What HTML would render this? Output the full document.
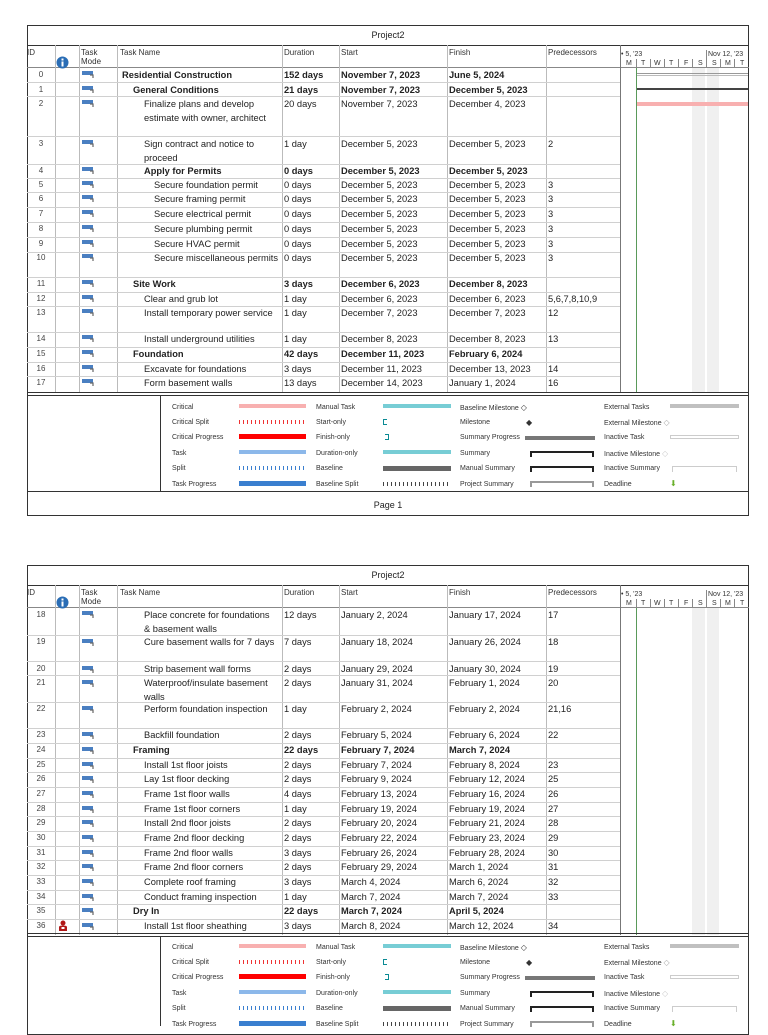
<!DOCTYPE html>
<html><head><meta charset="utf-8"><style>
*{margin:0;padding:0;box-sizing:border-box}
body{width:768px;height:1024px;background:#fff;position:relative;overflow:hidden;font-family:"Liberation Sans",sans-serif;color:#222}
.a{position:absolute}
.frame{position:absolute;left:27px;width:722px;border:1px solid #333}
.hl{position:absolute;height:1px;background:#d0d0d0}
.vl{position:absolute;width:1px;background:#bbb}
.t{position:absolute;font-size:9.3px;line-height:14px;white-space:nowrap}
.b{font-weight:bold}
.id{width:28px;text-align:center;font-size:8px;color:#444}
.hd{font-size:8px;color:#333;line-height:9px}
.lg{position:absolute;font-size:7px;color:#333;line-height:9px;white-space:nowrap}
.icon{position:absolute;width:14px;height:8px}
</style></head><body>

<!-- ================= PAGE 1 ================= -->
<div class="frame" style="top:25px;height:491px"></div>
<div class="t" style="left:27px;width:722px;top:28px;text-align:center;font-size:9px">Project2</div>
<div class="a" style="left:27px;top:45px;width:722px;height:1px;background:#333"></div>
<div class="a" style="left:27px;top:67px;width:722px;height:1px;background:#888"></div>
<!-- gantt shading -->
<div class="a" style="left:692px;top:68px;width:13px;height:324px;background:#f0f0f0"></div>
<div class="a" style="left:707px;top:68px;width:12px;height:324px;background:#f0f0f0"></div>
<div class="a" style="left:636px;top:68px;width:1px;height:324px;background:#5a9a5a"></div>
<div class="a" style="left:637px;top:73px;width:111px;height:1px;background:#999"></div>
<div class="a" style="left:637px;top:75px;width:111px;height:1px;background:#bbb"></div>
<div class="a" style="left:637px;top:88px;width:111px;height:2px;background:#444"></div>
<div class="a" style="left:637px;top:102px;width:111px;height:4px;background:#f8b0b0"></div>
<!-- vertical lines -->
<div class="vl" style="left:55px;top:45px;height:347px"></div>
<div class="vl" style="left:79px;top:45px;height:347px"></div>
<div class="vl" style="left:117px;top:45px;height:347px"></div>
<div class="vl" style="left:282px;top:45px;height:347px"></div>
<div class="vl" style="left:339px;top:45px;height:347px"></div>
<div class="vl" style="left:447px;top:45px;height:347px"></div>
<div class="vl" style="left:546px;top:45px;height:347px"></div>
<div class="vl" style="left:620px;top:45px;height:347px;background:#777"></div>
<!-- header -->
<div class="t hd" style="left:27px;top:48px">ID</div>
<svg class="a" style="left:56px;top:56px" width="13" height="13"><circle cx="6.5" cy="6.5" r="6" fill="#2a6db5"/><rect x="5.5" y="5.5" width="2" height="5" fill="#fff"/><rect x="5.5" y="2.5" width="2" height="2" fill="#fff"/></svg>
<div class="t hd" style="left:81px;top:48px">Task<br>Mode</div>
<div class="t hd" style="left:120px;top:48px">Task Name</div>
<div class="t hd" style="left:284px;top:48px">Duration</div>
<div class="t hd" style="left:341px;top:48px">Start</div>
<div class="t hd" style="left:449px;top:48px">Finish</div>
<div class="t hd" style="left:548px;top:48px">Predecessors</div>
<div class="t hd" style="left:621px;top:50px;font-size:7px">• 5, '23</div>
<div class="t hd" style="left:708px;top:50px;font-size:7px">Nov 12, '23</div>
<div class="a" style="left:706px;top:50px;width:1px;height:17px;background:#888"></div>
<div class="t hd" style="left:622px;top:59px;font-size:7px;letter-spacing:0">
<span style="position:absolute;left:4px">M</span><span style="position:absolute;left:19px">T</span><span style="position:absolute;left:32px">W</span><span style="position:absolute;left:47px">T</span><span style="position:absolute;left:62px">F</span><span style="position:absolute;left:76px">S</span><span style="position:absolute;left:90px">S</span><span style="position:absolute;left:103px">M</span><span style="position:absolute;left:118px">T</span></div>
<div class="a" style="left:636px;top:59px;width:1px;height:8px;background:#888"></div>
<div class="a" style="left:650px;top:59px;width:1px;height:8px;background:#888"></div>
<div class="a" style="left:664px;top:59px;width:1px;height:8px;background:#888"></div>
<div class="a" style="left:678px;top:59px;width:1px;height:8px;background:#888"></div>
<div class="a" style="left:692px;top:59px;width:1px;height:8px;background:#888"></div>
<div class="a" style="left:720px;top:59px;width:1px;height:8px;background:#888"></div>
<div class="a" style="left:734px;top:59px;width:1px;height:8px;background:#888"></div>

<!-- row lines page1 -->
<div class="hl" style="left:27px;width:593px;top:82px"></div>
<div class="hl" style="left:27px;width:593px;top:96px"></div>
<div class="hl" style="left:27px;width:593px;top:136px"></div>
<div class="hl" style="left:27px;width:593px;top:164px"></div>
<div class="hl" style="left:27px;width:593px;top:178px"></div>
<div class="hl" style="left:27px;width:593px;top:192px"></div>
<div class="hl" style="left:27px;width:593px;top:207px"></div>
<div class="hl" style="left:27px;width:593px;top:222px"></div>
<div class="hl" style="left:27px;width:593px;top:237px"></div>
<div class="hl" style="left:27px;width:593px;top:252px"></div>
<div class="hl" style="left:27px;width:593px;top:277px"></div>
<div class="hl" style="left:27px;width:593px;top:292px"></div>
<div class="hl" style="left:27px;width:593px;top:306px"></div>
<div class="hl" style="left:27px;width:593px;top:332px"></div>
<div class="hl" style="left:27px;width:593px;top:347px"></div>
<div class="hl" style="left:27px;width:593px;top:362px"></div>
<div class="hl" style="left:27px;width:593px;top:376px"></div>

<!-- rows page 1 -->
<div class="t id" style="left:27px;top:68px">0</div><div class="t b" style="left:122px;top:68px">Residential Construction</div><div class="t b" style="left:284px;top:68px">152 days</div><div class="t b" style="left:341px;top:68px">November 7, 2023</div><div class="t b" style="left:449px;top:68px">June 5, 2024</div>
<div class="t id" style="left:27px;top:83px">1</div><div class="t b" style="left:133px;top:83px">General Conditions</div><div class="t b" style="left:284px;top:83px">21 days</div><div class="t b" style="left:341px;top:83px">November 7, 2023</div><div class="t b" style="left:449px;top:83px">December 5, 2023</div>
<div class="t id" style="left:27px;top:97px">2</div><div class="t" style="left:144px;top:97px">Finalize plans and develop<br>estimate with owner, architect</div><div class="t" style="left:284px;top:97px">20 days</div><div class="t" style="left:341px;top:97px">November 7, 2023</div><div class="t" style="left:449px;top:97px">December 4, 2023</div>
<div class="t id" style="left:27px;top:137px">3</div><div class="t" style="left:144px;top:137px">Sign contract and notice to<br>proceed</div><div class="t" style="left:284px;top:137px">1 day</div><div class="t" style="left:341px;top:137px">December 5, 2023</div><div class="t" style="left:449px;top:137px">December 5, 2023</div><div class="t" style="left:548px;top:137px">2</div>
<div class="t id" style="left:27px;top:164px">4</div><div class="t b" style="left:144px;top:164px">Apply for Permits</div><div class="t b" style="left:284px;top:164px">0 days</div><div class="t b" style="left:341px;top:164px">December 5, 2023</div><div class="t b" style="left:449px;top:164px">December 5, 2023</div>
<div class="t id" style="left:27px;top:178px">5</div><div class="t" style="left:154px;top:178px">Secure foundation permit</div><div class="t" style="left:284px;top:178px">0 days</div><div class="t" style="left:341px;top:178px">December 5, 2023</div><div class="t" style="left:449px;top:178px">December 5, 2023</div><div class="t" style="left:548px;top:178px">3</div>
<div class="t id" style="left:27px;top:192px">6</div><div class="t" style="left:154px;top:192px">Secure framing permit</div><div class="t" style="left:284px;top:192px">0 days</div><div class="t" style="left:341px;top:192px">December 5, 2023</div><div class="t" style="left:449px;top:192px">December 5, 2023</div><div class="t" style="left:548px;top:192px">3</div>
<div class="t id" style="left:27px;top:207px">7</div><div class="t" style="left:154px;top:207px">Secure electrical permit</div><div class="t" style="left:284px;top:207px">0 days</div><div class="t" style="left:341px;top:207px">December 5, 2023</div><div class="t" style="left:449px;top:207px">December 5, 2023</div><div class="t" style="left:548px;top:207px">3</div>
<div class="t id" style="left:27px;top:222px">8</div><div class="t" style="left:154px;top:222px">Secure plumbing permit</div><div class="t" style="left:284px;top:222px">0 days</div><div class="t" style="left:341px;top:222px">December 5, 2023</div><div class="t" style="left:449px;top:222px">December 5, 2023</div><div class="t" style="left:548px;top:222px">3</div>
<div class="t id" style="left:27px;top:237px">9</div><div class="t" style="left:154px;top:237px">Secure HVAC permit</div><div class="t" style="left:284px;top:237px">0 days</div><div class="t" style="left:341px;top:237px">December 5, 2023</div><div class="t" style="left:449px;top:237px">December 5, 2023</div><div class="t" style="left:548px;top:237px">3</div>
<div class="t id" style="left:27px;top:251px">10</div><div class="t" style="left:154px;top:251px">Secure miscellaneous permits</div><div class="t" style="left:284px;top:251px">0 days</div><div class="t" style="left:341px;top:251px">December 5, 2023</div><div class="t" style="left:449px;top:251px">December 5, 2023</div><div class="t" style="left:548px;top:251px">3</div>
<div class="t id" style="left:27px;top:277px">11</div><div class="t b" style="left:133px;top:277px">Site Work</div><div class="t b" style="left:284px;top:277px">3 days</div><div class="t b" style="left:341px;top:277px">December 6, 2023</div><div class="t b" style="left:449px;top:277px">December 8, 2023</div>
<div class="t id" style="left:27px;top:292px">12</div><div class="t" style="left:144px;top:292px">Clear and grub lot</div><div class="t" style="left:284px;top:292px">1 day</div><div class="t" style="left:341px;top:292px">December 6, 2023</div><div class="t" style="left:449px;top:292px">December 6, 2023</div><div class="t" style="left:548px;top:292px">5,6,7,8,10,9</div>
<div class="t id" style="left:27px;top:306px">13</div><div class="t" style="left:144px;top:306px">Install temporary power service</div><div class="t" style="left:284px;top:306px">1 day</div><div class="t" style="left:341px;top:306px">December 7, 2023</div><div class="t" style="left:449px;top:306px">December 7, 2023</div><div class="t" style="left:548px;top:306px">12</div>
<div class="t id" style="left:27px;top:332px">14</div><div class="t" style="left:144px;top:332px">Install underground utilities</div><div class="t" style="left:284px;top:332px">1 day</div><div class="t" style="left:341px;top:332px">December 8, 2023</div><div class="t" style="left:449px;top:332px">December 8, 2023</div><div class="t" style="left:548px;top:332px">13</div>
<div class="t id" style="left:27px;top:347px">15</div><div class="t b" style="left:133px;top:347px">Foundation</div><div class="t b" style="left:284px;top:347px">42 days</div><div class="t b" style="left:341px;top:347px">December 11, 2023</div><div class="t b" style="left:449px;top:347px">February 6, 2024</div>
<div class="t id" style="left:27px;top:362px">16</div><div class="t" style="left:144px;top:362px">Excavate for foundations</div><div class="t" style="left:284px;top:362px">3 days</div><div class="t" style="left:341px;top:362px">December 11, 2023</div><div class="t" style="left:449px;top:362px">December 13, 2023</div><div class="t" style="left:548px;top:362px">14</div>
<div class="t id" style="left:27px;top:376px">17</div><div class="t" style="left:144px;top:376px">Form basement walls</div><div class="t" style="left:284px;top:376px">13 days</div><div class="t" style="left:341px;top:376px">December 14, 2023</div><div class="t" style="left:449px;top:376px">January 1, 2024</div><div class="t" style="left:548px;top:376px">16</div>

<!-- task mode icons page1 -->
<svg class="a" style="left:81px;top:68px" width="16" height="324">
<defs><g id="tm"><rect x="1" y="3" width="11" height="4" fill="#4a7fc1"/><path d="M9 7 h3 v3" stroke="#666" stroke-width="1.2" fill="none"/></g></defs>
<use href="#tm" y="0"/><use href="#tm" y="15"/><use href="#tm" y="29"/><use href="#tm" y="69"/><use href="#tm" y="96"/><use href="#tm" y="110"/><use href="#tm" y="124"/><use href="#tm" y="139"/><use href="#tm" y="154"/><use href="#tm" y="169"/><use href="#tm" y="183"/><use href="#tm" y="209"/><use href="#tm" y="224"/><use href="#tm" y="238"/><use href="#tm" y="264"/><use href="#tm" y="279"/><use href="#tm" y="294"/><use href="#tm" y="308"/>
</svg>

<!-- legend page1 -->
<div class="a" style="left:27px;top:392px;width:722px;height:1px;background:#333"></div>
<div class="a" style="left:27px;top:395px;width:722px;height:1px;background:#333"></div>
<div class="a" style="left:160px;top:395px;width:1px;height:96px;background:#333"></div>
<div class="a" style="left:27px;top:491px;width:722px;height:1px;background:#333"></div>
<div class="t" style="left:27px;top:498px;width:722px;text-align:center;font-size:9px">Page 1</div>

<div class="a" style="left:0;top:395px;width:768px;height:100px">
<div class="lg" style="left:172px;top:8px">Critical</div><div class="a" style="left:239px;top:9px;width:67px;height:4px;background:#f8b0b0"></div>
<div class="lg" style="left:172px;top:23px">Critical Split</div><div class="a" style="left:239px;top:25px;width:67px;height:4px;background:repeating-linear-gradient(90deg,#e33 0 1px,transparent 1px 4px)"></div>
<div class="lg" style="left:172px;top:38px">Critical Progress</div><div class="a" style="left:239px;top:39px;width:67px;height:5px;background:#f00"></div>
<div class="lg" style="left:172px;top:54px">Task</div><div class="a" style="left:239px;top:55px;width:67px;height:4px;background:#8cb8ea"></div>
<div class="lg" style="left:172px;top:69px">Split</div><div class="a" style="left:239px;top:71px;width:67px;height:4px;background:repeating-linear-gradient(90deg,#3a7fcf 0 1px,transparent 1px 4px)"></div>
<div class="lg" style="left:172px;top:85px">Task Progress</div><div class="a" style="left:239px;top:86px;width:67px;height:5px;background:#3a7fcf"></div>

<div class="lg" style="left:316px;top:8px">Manual Task</div><div class="a" style="left:383px;top:9px;width:68px;height:4px;background:#77cdd5"></div>
<div class="lg" style="left:316px;top:23px">Start-only</div><div class="a" style="left:383px;top:24px;width:4px;height:6px;border:1.5px solid #0a8a94;border-right:none"></div>
<div class="lg" style="left:316px;top:38px">Finish-only</div><div class="a" style="left:385px;top:39px;width:4px;height:6px;border:1.5px solid #0a8a94;border-left:none"></div>
<div class="lg" style="left:316px;top:54px">Duration-only</div><div class="a" style="left:383px;top:55px;width:68px;height:4px;background:#77cdd5"></div>
<div class="lg" style="left:316px;top:69px">Baseline</div><div class="a" style="left:383px;top:71px;width:68px;height:5px;background:#666"></div>
<div class="lg" style="left:316px;top:85px">Baseline Split</div><div class="a" style="left:383px;top:87px;width:68px;height:4px;background:repeating-linear-gradient(90deg,#444 0 1px,transparent 1px 4px)"></div>

<div class="lg" style="left:460px;top:8px">Baseline Milestone <span style="font-size:8px">◇</span></div>
<div class="lg" style="left:460px;top:23px">Milestone</div><div class="lg" style="left:526px;top:23px;font-size:8px">◆</div>
<div class="lg" style="left:460px;top:38px">Summary Progress</div><div class="a" style="left:525px;top:41px;width:70px;height:4px;background:#777"></div>
<div class="lg" style="left:460px;top:54px">Summary</div><div class="a" style="left:530px;top:56px;width:64px;height:6px;border:2px solid #222;border-bottom:none"></div>
<div class="lg" style="left:460px;top:69px">Manual Summary</div><div class="a" style="left:530px;top:71px;width:64px;height:6px;border:2px solid #222;border-bottom:none"></div>
<div class="lg" style="left:460px;top:85px">Project Summary</div><div class="a" style="left:530px;top:86px;width:64px;height:6px;border:2px solid #999;border-bottom:none"></div>

<div class="lg" style="left:604px;top:8px">External Tasks</div><div class="a" style="left:670px;top:9px;width:69px;height:4px;background:#c0c0c0"></div>
<div class="lg" style="left:604px;top:23px">External Milestone <span style="color:#aaa;font-size:8px">◇</span></div>
<div class="lg" style="left:604px;top:38px">Inactive Task</div><div class="a" style="left:670px;top:40px;width:69px;height:4px;border:1px solid #ccc"></div>
<div class="lg" style="left:604px;top:54px">Inactive Milestone <span style="color:#ccc;font-size:8px">◇</span></div>
<div class="lg" style="left:604px;top:69px">Inactive Summary</div><div class="a" style="left:672px;top:71px;width:65px;height:6px;border:1px solid #ccc;border-bottom:none"></div>
<div class="lg" style="left:604px;top:85px">Deadline</div><div class="lg" style="left:670px;top:84px;color:#6ab02c;font-size:8px">⬇</div>
</div>

<!-- ================= PAGE 2 ================= -->
<div class="frame" style="top:565px;height:470px"></div>
<div class="t" style="left:27px;top:568px;width:722px;text-align:center;font-size:9px">Project2</div>
<div class="a" style="left:27px;top:585px;width:722px;height:1px;background:#333"></div>
<div class="a" style="left:27px;top:607px;width:722px;height:1px;background:#888"></div>
<div class="a" style="left:692px;top:608px;width:13px;height:327px;background:#f0f0f0"></div>
<div class="a" style="left:707px;top:608px;width:12px;height:327px;background:#f0f0f0"></div>
<div class="a" style="left:636px;top:608px;width:1px;height:327px;background:#5a9a5a"></div>
<div class="vl" style="left:55px;top:585px;height:350px"></div>
<div class="vl" style="left:79px;top:585px;height:350px"></div>
<div class="vl" style="left:117px;top:585px;height:350px"></div>
<div class="vl" style="left:282px;top:585px;height:350px"></div>
<div class="vl" style="left:339px;top:585px;height:350px"></div>
<div class="vl" style="left:447px;top:585px;height:350px"></div>
<div class="vl" style="left:546px;top:585px;height:350px"></div>
<div class="vl" style="left:620px;top:585px;height:350px;background:#777"></div>
<div class="t hd" style="left:27px;top:588px">ID</div>
<svg class="a" style="left:56px;top:596px" width="13" height="13"><circle cx="6.5" cy="6.5" r="6" fill="#2a6db5"/><rect x="5.5" y="5.5" width="2" height="5" fill="#fff"/><rect x="5.5" y="2.5" width="2" height="2" fill="#fff"/></svg>
<div class="t hd" style="left:81px;top:588px">Task<br>Mode</div>
<div class="t hd" style="left:120px;top:588px">Task Name</div>
<div class="t hd" style="left:284px;top:588px">Duration</div>
<div class="t hd" style="left:341px;top:588px">Start</div>
<div class="t hd" style="left:449px;top:588px">Finish</div>
<div class="t hd" style="left:548px;top:588px">Predecessors</div>
<div class="t hd" style="left:621px;top:590px;font-size:7px">• 5, '23</div>
<div class="t hd" style="left:708px;top:590px;font-size:7px">Nov 12, '23</div>
<div class="a" style="left:706px;top:590px;width:1px;height:17px;background:#888"></div>
<div class="t hd" style="left:622px;top:599px;font-size:7px">
<span style="position:absolute;left:4px">M</span><span style="position:absolute;left:19px">T</span><span style="position:absolute;left:32px">W</span><span style="position:absolute;left:47px">T</span><span style="position:absolute;left:62px">F</span><span style="position:absolute;left:76px">S</span><span style="position:absolute;left:90px">S</span><span style="position:absolute;left:103px">M</span><span style="position:absolute;left:118px">T</span></div>
<div class="a" style="left:636px;top:599px;width:1px;height:8px;background:#888"></div>
<div class="a" style="left:650px;top:599px;width:1px;height:8px;background:#888"></div>
<div class="a" style="left:664px;top:599px;width:1px;height:8px;background:#888"></div>
<div class="a" style="left:678px;top:599px;width:1px;height:8px;background:#888"></div>
<div class="a" style="left:692px;top:599px;width:1px;height:8px;background:#888"></div>
<div class="a" style="left:720px;top:599px;width:1px;height:8px;background:#888"></div>
<div class="a" style="left:734px;top:599px;width:1px;height:8px;background:#888"></div>

<div class="hl" style="left:27px;width:593px;top:635px"></div>
<div class="hl" style="left:27px;width:593px;top:661px"></div>
<div class="hl" style="left:27px;width:593px;top:675px"></div>
<div class="hl" style="left:27px;width:593px;top:702px"></div>
<div class="hl" style="left:27px;width:593px;top:728px"></div>
<div class="hl" style="left:27px;width:593px;top:743px"></div>
<div class="hl" style="left:27px;width:593px;top:758px"></div>
<div class="hl" style="left:27px;width:593px;top:772px"></div>
<div class="hl" style="left:27px;width:593px;top:787px"></div>
<div class="hl" style="left:27px;width:593px;top:802px"></div>
<div class="hl" style="left:27px;width:593px;top:816px"></div>
<div class="hl" style="left:27px;width:593px;top:831px"></div>
<div class="hl" style="left:27px;width:593px;top:846px"></div>
<div class="hl" style="left:27px;width:593px;top:860px"></div>
<div class="hl" style="left:27px;width:593px;top:875px"></div>
<div class="hl" style="left:27px;width:593px;top:890px"></div>
<div class="hl" style="left:27px;width:593px;top:904px"></div>
<div class="hl" style="left:27px;width:593px;top:919px"></div>

<div class="t id" style="left:27px;top:608px">18</div><div class="t" style="left:144px;top:608px">Place concrete for foundations<br>&amp; basement walls</div><div class="t" style="left:284px;top:608px">12 days</div><div class="t" style="left:341px;top:608px">January 2, 2024</div><div class="t" style="left:449px;top:608px">January 17, 2024</div><div class="t" style="left:548px;top:608px">17</div>
<div class="t id" style="left:27px;top:635px">19</div><div class="t" style="left:144px;top:635px">Cure basement walls for 7 days</div><div class="t" style="left:284px;top:635px">7 days</div><div class="t" style="left:341px;top:635px">January 18, 2024</div><div class="t" style="left:449px;top:635px">January 26, 2024</div><div class="t" style="left:548px;top:635px">18</div>
<div class="t id" style="left:27px;top:662px">20</div><div class="t" style="left:144px;top:662px">Strip basement wall forms</div><div class="t" style="left:284px;top:662px">2 days</div><div class="t" style="left:341px;top:662px">January 29, 2024</div><div class="t" style="left:449px;top:662px">January 30, 2024</div><div class="t" style="left:548px;top:662px">19</div>
<div class="t id" style="left:27px;top:676px">21</div><div class="t" style="left:144px;top:676px">Waterproof/insulate basement<br>walls</div><div class="t" style="left:284px;top:676px">2 days</div><div class="t" style="left:341px;top:676px">January 31, 2024</div><div class="t" style="left:449px;top:676px">February 1, 2024</div><div class="t" style="left:548px;top:676px">20</div>
<div class="t id" style="left:27px;top:702px">22</div><div class="t" style="left:144px;top:702px">Perform foundation inspection</div><div class="t" style="left:284px;top:702px">1 day</div><div class="t" style="left:341px;top:702px">February 2, 2024</div><div class="t" style="left:449px;top:702px">February 2, 2024</div><div class="t" style="left:548px;top:702px">21,16</div>
<div class="t id" style="left:27px;top:728px">23</div><div class="t" style="left:144px;top:728px">Backfill foundation</div><div class="t" style="left:284px;top:728px">2 days</div><div class="t" style="left:341px;top:728px">February 5, 2024</div><div class="t" style="left:449px;top:728px">February 6, 2024</div><div class="t" style="left:548px;top:728px">22</div>
<div class="t id" style="left:27px;top:743px">24</div><div class="t b" style="left:133px;top:743px">Framing</div><div class="t b" style="left:284px;top:743px">22 days</div><div class="t b" style="left:341px;top:743px">February 7, 2024</div><div class="t b" style="left:449px;top:743px">March 7, 2024</div>
<div class="t id" style="left:27px;top:758px">25</div><div class="t" style="left:144px;top:758px">Install 1st floor joists</div><div class="t" style="left:284px;top:758px">2 days</div><div class="t" style="left:341px;top:758px">February 7, 2024</div><div class="t" style="left:449px;top:758px">February 8, 2024</div><div class="t" style="left:548px;top:758px">23</div>
<div class="t id" style="left:27px;top:772px">26</div><div class="t" style="left:144px;top:772px">Lay 1st floor decking</div><div class="t" style="left:284px;top:772px">2 days</div><div class="t" style="left:341px;top:772px">February 9, 2024</div><div class="t" style="left:449px;top:772px">February 12, 2024</div><div class="t" style="left:548px;top:772px">25</div>
<div class="t id" style="left:27px;top:787px">27</div><div class="t" style="left:144px;top:787px">Frame 1st floor walls</div><div class="t" style="left:284px;top:787px">4 days</div><div class="t" style="left:341px;top:787px">February 13, 2024</div><div class="t" style="left:449px;top:787px">February 16, 2024</div><div class="t" style="left:548px;top:787px">26</div>
<div class="t id" style="left:27px;top:802px">28</div><div class="t" style="left:144px;top:802px">Frame 1st floor corners</div><div class="t" style="left:284px;top:802px">1 day</div><div class="t" style="left:341px;top:802px">February 19, 2024</div><div class="t" style="left:449px;top:802px">February 19, 2024</div><div class="t" style="left:548px;top:802px">27</div>
<div class="t id" style="left:27px;top:816px">29</div><div class="t" style="left:144px;top:816px">Install 2nd floor joists</div><div class="t" style="left:284px;top:816px">2 days</div><div class="t" style="left:341px;top:816px">February 20, 2024</div><div class="t" style="left:449px;top:816px">February 21, 2024</div><div class="t" style="left:548px;top:816px">28</div>
<div class="t id" style="left:27px;top:831px">30</div><div class="t" style="left:144px;top:831px">Frame 2nd floor decking</div><div class="t" style="left:284px;top:831px">2 days</div><div class="t" style="left:341px;top:831px">February 22, 2024</div><div class="t" style="left:449px;top:831px">February 23, 2024</div><div class="t" style="left:548px;top:831px">29</div>
<div class="t id" style="left:27px;top:846px">31</div><div class="t" style="left:144px;top:846px">Frame 2nd floor walls</div><div class="t" style="left:284px;top:846px">3 days</div><div class="t" style="left:341px;top:846px">February 26, 2024</div><div class="t" style="left:449px;top:846px">February 28, 2024</div><div class="t" style="left:548px;top:846px">30</div>
<div class="t id" style="left:27px;top:860px">32</div><div class="t" style="left:144px;top:860px">Frame 2nd floor corners</div><div class="t" style="left:284px;top:860px">2 days</div><div class="t" style="left:341px;top:860px">February 29, 2024</div><div class="t" style="left:449px;top:860px">March 1, 2024</div><div class="t" style="left:548px;top:860px">31</div>
<div class="t id" style="left:27px;top:875px">33</div><div class="t" style="left:144px;top:875px">Complete roof framing</div><div class="t" style="left:284px;top:875px">3 days</div><div class="t" style="left:341px;top:875px">March 4, 2024</div><div class="t" style="left:449px;top:875px">March 6, 2024</div><div class="t" style="left:548px;top:875px">32</div>
<div class="t id" style="left:27px;top:890px">34</div><div class="t" style="left:144px;top:890px">Conduct framing inspection</div><div class="t" style="left:284px;top:890px">1 day</div><div class="t" style="left:341px;top:890px">March 7, 2024</div><div class="t" style="left:449px;top:890px">March 7, 2024</div><div class="t" style="left:548px;top:890px">33</div>
<div class="t id" style="left:27px;top:904px">35</div><div class="t b" style="left:133px;top:904px">Dry In</div><div class="t b" style="left:284px;top:904px">22 days</div><div class="t b" style="left:341px;top:904px">March 7, 2024</div><div class="t b" style="left:449px;top:904px">April 5, 2024</div>
<div class="t id" style="left:27px;top:919px">36</div><div class="t" style="left:144px;top:919px">Install 1st floor sheathing</div><div class="t" style="left:284px;top:919px">3 days</div><div class="t" style="left:341px;top:919px">March 8, 2024</div><div class="t" style="left:449px;top:919px">March 12, 2024</div><div class="t" style="left:548px;top:919px">34</div>
<svg class="a" style="left:58px;top:920px" width="10" height="12"><circle cx="5" cy="3" r="2.5" fill="#b01818"/><path d="M1 11 V7 Q1 5.5 5 5.5 Q9 5.5 9 7 V11 Z" fill="#b01818"/><rect x="3.5" y="7" width="3" height="2" fill="#fff"/></svg>

<svg class="a" style="left:81px;top:608px" width="16" height="327">
<use href="#tm" y="0"/><use href="#tm" y="28"/><use href="#tm" y="55"/><use href="#tm" y="69"/><use href="#tm" y="95"/><use href="#tm" y="121"/><use href="#tm" y="136"/><use href="#tm" y="151"/><use href="#tm" y="165"/><use href="#tm" y="180"/><use href="#tm" y="195"/><use href="#tm" y="209"/><use href="#tm" y="224"/><use href="#tm" y="239"/><use href="#tm" y="253"/><use href="#tm" y="268"/><use href="#tm" y="283"/><use href="#tm" y="297"/><use href="#tm" y="312"/>
</svg>

<div class="a" style="left:27px;top:933px;width:722px;height:1px;background:#333"></div>
<div class="a" style="left:27px;top:936px;width:722px;height:1px;background:#333"></div>
<div class="a" style="left:160px;top:936px;width:1px;height:90px;background:#333"></div>

<div class="a" style="left:0;top:935px;width:768px;height:100px">
<div class="lg" style="left:172px;top:8px">Critical</div><div class="a" style="left:239px;top:9px;width:67px;height:4px;background:#f8b0b0"></div>
<div class="lg" style="left:172px;top:23px">Critical Split</div><div class="a" style="left:239px;top:25px;width:67px;height:4px;background:repeating-linear-gradient(90deg,#e33 0 1px,transparent 1px 4px)"></div>
<div class="lg" style="left:172px;top:38px">Critical Progress</div><div class="a" style="left:239px;top:39px;width:67px;height:5px;background:#f00"></div>
<div class="lg" style="left:172px;top:54px">Task</div><div class="a" style="left:239px;top:55px;width:67px;height:4px;background:#8cb8ea"></div>
<div class="lg" style="left:172px;top:69px">Split</div><div class="a" style="left:239px;top:71px;width:67px;height:4px;background:repeating-linear-gradient(90deg,#3a7fcf 0 1px,transparent 1px 4px)"></div>
<div class="lg" style="left:172px;top:85px">Task Progress</div><div class="a" style="left:239px;top:86px;width:67px;height:5px;background:#3a7fcf"></div>

<div class="lg" style="left:316px;top:8px">Manual Task</div><div class="a" style="left:383px;top:9px;width:68px;height:4px;background:#77cdd5"></div>
<div class="lg" style="left:316px;top:23px">Start-only</div><div class="a" style="left:383px;top:24px;width:4px;height:6px;border:1.5px solid #0a8a94;border-right:none"></div>
<div class="lg" style="left:316px;top:38px">Finish-only</div><div class="a" style="left:385px;top:39px;width:4px;height:6px;border:1.5px solid #0a8a94;border-left:none"></div>
<div class="lg" style="left:316px;top:54px">Duration-only</div><div class="a" style="left:383px;top:55px;width:68px;height:4px;background:#77cdd5"></div>
<div class="lg" style="left:316px;top:69px">Baseline</div><div class="a" style="left:383px;top:71px;width:68px;height:5px;background:#666"></div>
<div class="lg" style="left:316px;top:85px">Baseline Split</div><div class="a" style="left:383px;top:87px;width:68px;height:4px;background:repeating-linear-gradient(90deg,#444 0 1px,transparent 1px 4px)"></div>

<div class="lg" style="left:460px;top:8px">Baseline Milestone <span style="font-size:8px">◇</span></div>
<div class="lg" style="left:460px;top:23px">Milestone</div><div class="lg" style="left:526px;top:23px;font-size:8px">◆</div>
<div class="lg" style="left:460px;top:38px">Summary Progress</div><div class="a" style="left:525px;top:41px;width:70px;height:4px;background:#777"></div>
<div class="lg" style="left:460px;top:54px">Summary</div><div class="a" style="left:530px;top:56px;width:64px;height:6px;border:2px solid #222;border-bottom:none"></div>
<div class="lg" style="left:460px;top:69px">Manual Summary</div><div class="a" style="left:530px;top:71px;width:64px;height:6px;border:2px solid #222;border-bottom:none"></div>
<div class="lg" style="left:460px;top:85px">Project Summary</div><div class="a" style="left:530px;top:86px;width:64px;height:6px;border:2px solid #999;border-bottom:none"></div>

<div class="lg" style="left:604px;top:8px">External Tasks</div><div class="a" style="left:670px;top:9px;width:69px;height:4px;background:#c0c0c0"></div>
<div class="lg" style="left:604px;top:23px">External Milestone <span style="color:#aaa;font-size:8px">◇</span></div>
<div class="lg" style="left:604px;top:38px">Inactive Task</div><div class="a" style="left:670px;top:40px;width:69px;height:4px;border:1px solid #ccc"></div>
<div class="lg" style="left:604px;top:54px">Inactive Milestone <span style="color:#ccc;font-size:8px">◇</span></div>
<div class="lg" style="left:604px;top:69px">Inactive Summary</div><div class="a" style="left:672px;top:71px;width:65px;height:6px;border:1px solid #ccc;border-bottom:none"></div>
<div class="lg" style="left:604px;top:85px">Deadline</div><div class="lg" style="left:670px;top:84px;color:#6ab02c;font-size:8px">⬇</div>
</div>

</body></html>
